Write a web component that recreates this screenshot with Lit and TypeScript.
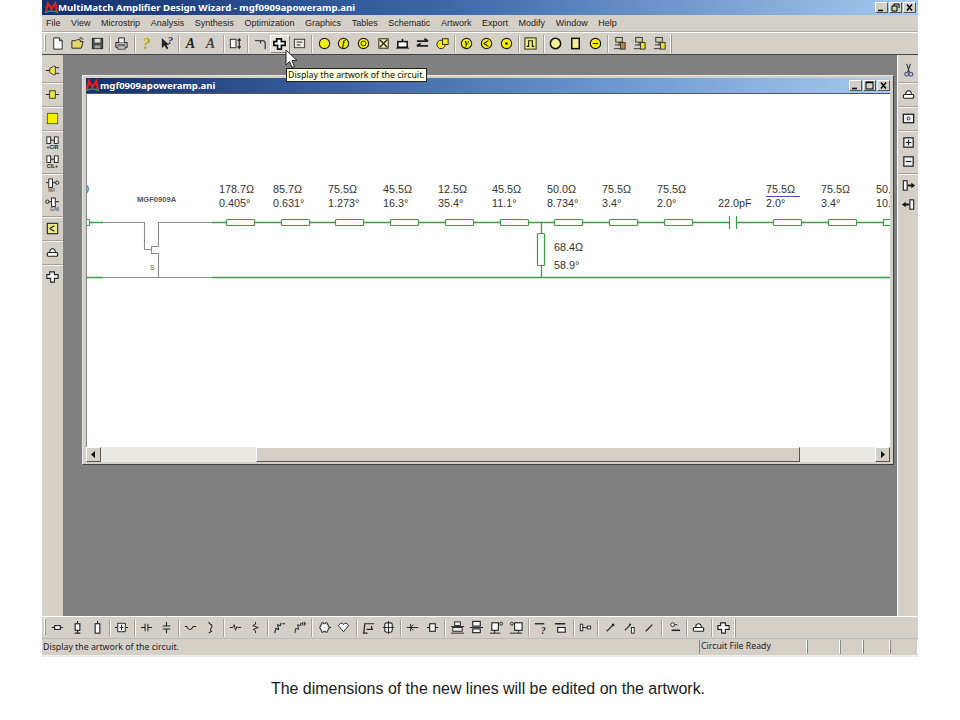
import { LitElement, html, css, svg } from 'lit';
import { customElement } from 'lit/decorators.js';

const GREEN = '#3f9c44';
const GRAY = '#8c8c8c';

const yc = (inner: unknown = '') => svg`<circle cx="8" cy="8" r="5.5" fill="#f4ee10" stroke="#222" stroke-width="1.2"/>${inner}`;
const ln = (d: string, w = 1, c = '#222') => svg`<path d=${d} fill="none" stroke=${c} stroke-width=${w}/>`;
const tx = (t: string, x: number, y: number, size: number, color = '#222') =>
  svg`<text x=${x} y=${y} font-size=${size} font-family="Liberation Serif, serif" font-weight="bold" font-style="italic" fill=${color} text-anchor="middle">${t}</text>`;
const plus = 'M2 6H5V3H10V6H14V10H10V14H6V10H2Z';

const ICONS: Record<string, unknown> = {
  newf: svg`<path d="M4 2H10L13 5V14H4Z" fill="#fff" stroke="#222"/>${ln('M10 2V5H13')}`,
  open: svg`<path d="M2 13V5H6L7 4H11V6H14L12 13Z" fill="#e6d668" stroke="#222"/>${ln('M10 2Q13 1 14 4', 1)}`,
  save: svg`<rect x="2.5" y="2.5" width="11" height="11" fill="#4c4c4c" stroke="#222"/><rect x="5" y="3" width="6" height="4" fill="#ddd"/><rect x="5" y="10" width="6" height="3" fill="#aaa"/>`,
  print: svg`<rect x="2" y="7" width="12" height="5" fill="#bbb" stroke="#222"/><path d="M5 7V2H11V7M4 12V14H12V12" fill="#eee" stroke="#222"/>${ln('M4 9.5H12')}`,
  help: tx('?', 8, 14, 17, '#b0a810'),
  ctx: svg`<path d="M3 2V13L6 10L8 14L10 13L8 9.5H11Z" fill="#222"/>${tx('?', 12, 9, 12, '#26267a')}`,
  a1: tx('A', 8, 13, 15),
  a2: tx('A', 8, 13, 15, '#444'),
  dim: svg`<rect x="2.5" y="3.5" width="6" height="9" fill="#fff" stroke="#222"/>${ln('M12 3V13M10.5 5L12 3L13.5 5M10.5 11L12 13L13.5 11', 1.2)}`,
  bend: ln('M2 5H10Q13 5 13 8V14M8 5V8', 1.4, '#444'),
  cross: svg`<path d=${plus} fill="#fff" stroke="#111" stroke-width="1.8"/>`,
  disp: svg`<rect x="2.5" y="3.5" width="11" height="9" fill="#e8e8e0" stroke="#333"/>${ln('M5 6.5H11M5 9.5H9')}`,
  c1: yc(),
  c2: yc(tx('f', 8, 11, 9)),
  c3: yc(svg`<circle cx="8" cy="8" r="2.6" fill="none" stroke="#222"/>`),
  grid: svg`<rect x="3" y="3" width="10" height="10" fill="#f4f0a0" stroke="#222"/>${ln('M4 4L12 12M12 4L4 12', 1.4)}`,
  tee: svg`${ln('M1 13H15')}<rect x="3" y="6" width="10" height="6" fill="#fff" stroke="#111" stroke-width="1.6"/>${ln('M8 3V6', 1.6, '#111')}`,
  swap: ln('M2 5.5H14M10 3L14 5.5M2 10.5H14M6 8L2 10.5', 2, '#222'),
  c4: svg`<circle cx="6.5" cy="9" r="4.5" fill="#f4ee10" stroke="#222"/><rect x="8" y="3" width="6" height="6" fill="#f4ee10" stroke="#222"/>`,
  cy: yc(tx('y', 8, 11, 10)),
  cs: yc(ln('M5 8L10 5M5 8L10 11', 1.2)),
  cd: yc(svg`<circle cx="8" cy="8" r="1.3" fill="#111"/>`),
  pulse: svg`<rect x="2" y="2" width="12" height="12" fill="#f0ea70" stroke="#222"/>${ln('M4 11H6V5H10V11H12', 1.2)}`,
  d1: svg`<circle cx="8" cy="8" r="5.5" fill="#f4f090" stroke="#111" stroke-width="1.6"/>`,
  d2: svg`<rect x="4" y="2.5" width="8" height="11" fill="#f4f090" stroke="#111" stroke-width="1.6"/>`,
  d3: svg`<circle cx="8" cy="8" r="5.5" fill="#f4ee10" stroke="#111" stroke-width="1.2"/>${ln('M5 8H11')}`,
  net1: svg`<rect x="4" y="1.5" width="7" height="5" fill="#cfcfa8" stroke="#333"/>${ln('M2 13.5H9M7.5 6.5V10M3 9.5H9', 1, '#333')}<rect x="9" y="7" width="5" height="7" fill="#b8862c" stroke="#333"/>`,
  net2: svg`<rect x="4" y="1.5" width="7" height="5" fill="#cfcfa8" stroke="#333"/>${ln('M2 13.5H9M7.5 6.5V10M3 9.5H9', 1, '#333')}<rect x="9" y="7" width="5" height="7" fill="#eee020" stroke="#333"/>`,
  tlh: svg`${ln('M2 8H14', 1.1)}<rect x="5" y="6" width="6" height="4" fill="#fff" stroke="#222" stroke-width="1.2"/>`,
  tlv: svg`${ln('M8 1V14M5 14H11', 1.1)}<rect x="5.5" y="4" width="5" height="7" fill="#fff" stroke="#222" stroke-width="1.2"/>`,
  tlo: svg`${ln('M8 1V4', 1.1)}<rect x="5.5" y="4" width="5" height="10" fill="#fff" stroke="#222" stroke-width="1.2"/>`,
  box: svg`${ln('M1 8H15', 1.1)}<rect x="4" y="3.5" width="8" height="9" fill="#fff" stroke="#222"/>${ln('M8 5V11M6 8H10')}`,
  caph: ln('M2 8H6.5M9.5 8H14M6.5 4V12M9.5 4V12', 1.1),
  capv: ln('M8 2V6.5M8 9.5V14M4 6.5H12M4 9.5H12', 1.1),
  indh: ln('M2 7H4Q6 11 8 10T11 7H14', 1.1),
  indv: ln('M6 2L7 4Q11 5 9 8T9 12L6 14', 1.1),
  resh: ln('M2 8H5L6.5 5L8 11L9.5 7L10.5 8H14', 1),
  resv: ln('M8 2V4.5L5 6L11 8L5.5 10L8 11.5V14', 1),
  zig1: ln('M3 14L4 9L7 10L6 5L9 6L9.5 3M11 4H14', 1.1),
  zig2: ln('M3 14L4 9L7 10L6 5L9 6L9.5 3M10 4H11.5M11.5 2V6M13.5 2V6M13.5 4H15', 1),
  gear: svg`<path d="M5 3H7V4H9V3H11V5H12V7H13V9H12V11H11V13H9V12H7V13H5V11H4V9H3V7H4V5H5Z" fill="#fff" stroke="#222"/>${ln('M13 8H15')}`,
  heart: svg`<path d="M2.5 6L5 3.5H7L8 5L9.5 3.5H11.5L13.5 6L8 12.5Z" fill="#fff" stroke="#222"/>`,
  bent: ln('M3 14L4 4H14M6 10H12L11 6.5M2 14H7', 1.3),
  cyl: svg`<rect x="4" y="3" width="8" height="10" rx="2" fill="#fff" stroke="#222" stroke-width="1.2"/>${ln('M8 1V15M2 8H14')}`,
  fork: ln('M2 8H14M6 4V12M9 5L6 8L9 11', 1),
  sqd: svg`${ln('M2 8H14', 1.1)}<rect x="5" y="4" width="6" height="8" fill="#fff" stroke="#222" stroke-width="1.2"/>`,
  stk: svg`<rect x="5" y="2" width="6" height="4" fill="#eee" stroke="#222"/><rect x="3" y="8" width="10" height="4" fill="#eee" stroke="#222"/>${ln('M1 14H15M8 6V8M1 7H15')}`,
  stk2: svg`<rect x="4" y="1.5" width="8" height="5" fill="#fff" stroke="#222" stroke-width="1.2"/><rect x="4" y="9.5" width="8" height="4" fill="#fff" stroke="#222" stroke-width="1.2"/>${ln('M1 8H15')}`,
  pad1: svg`<rect x="3" y="3" width="7" height="8" fill="#fff" stroke="#222" stroke-width="1.2"/><circle cx="13" cy="4" r="1.6" fill="none" stroke="#222"/>${ln('M1 14H12M6 11V14')}`,
  pad2: svg`<rect x="6" y="3" width="8" height="8" fill="#fff" stroke="#222" stroke-width="1.2"/><circle cx="3" cy="4" r="1.6" fill="none" stroke="#222"/>${ln('M1 14H14M10 11V14')}`,
  qbar: svg`${ln('M2 4H12', 1.4)}${tx('?', 11, 15, 10)}`,
  tbar: svg`${ln('M2 4H13', 1.6)}<rect x="5" y="8" width="8" height="5" fill="#fff" stroke="#222" stroke-width="1.2"/>`,
  conn: svg`<rect x="2.5" y="4.5" width="2.5" height="7" fill="#fff" stroke="#222"/>${ln('M5 8H10')}<rect x="10" y="6.5" width="3.5" height="3" fill="#fff" stroke="#222"/>`,
  diag: svg`${ln('M4 12L10 6', 1.2)}<rect x="9.5" y="4" width="2.5" height="2.5" fill="#222"/>`,
  diagb: svg`${ln('M3 11L8 6', 1.2)}<rect x="10" y="8" width="3" height="6" fill="#fff" stroke="#222"/><rect x="7.5" y="4" width="2" height="2" fill="#222"/>`,
  diag2: ln('M4 12L11 5', 1.3),
  dots: svg`<circle cx="6" cy="5" r="2" fill="#fff" stroke="#222"/>${ln('M8 5H11')}${ln('M5 11H14', 1.6, '#222')}`,
  bump: svg`<path d="M5 8Q5 4 8 4T11 8" fill="#fff" stroke="#222" stroke-width="1.2"/><rect x="2.5" y="8" width="11" height="4" rx="1" fill="#fff" stroke="#222" stroke-width="1.2"/>`,
  plus: svg`<path d=${plus} fill="#fff" stroke="#222" stroke-width="1.2"/>`,
  lead: svg`${ln('M1 8H5M11 5H15M11 11H15')}<path d="M5 6L9 3.5H11V12.5H9L5 10Z" fill="#f0e840" stroke="#333"/>`,
  lead2: svg`${ln('M1 8H15')}<rect x="5" y="4" width="6" height="8" fill="#f0e840" stroke="#333"/>`,
  yel: svg`<rect x="2.5" y="2.5" width="11" height="11" fill="#f6f000" stroke="#555"/>`,
  cir1: svg`<rect x="2" y="2" width="4" height="7" fill="#fff" stroke="#222"/><rect x="10" y="2" width="4" height="7" fill="#fff" stroke="#222"/>${ln('M6 5.5H10')}<text x="8" y="15" font-size="5.5" font-weight="bold" font-family="Liberation Sans" text-anchor="middle" fill="#222">+CIR</text>`,
  cir2: svg`<rect x="2" y="2" width="4" height="7" fill="#fff" stroke="#222"/><rect x="10" y="2" width="4" height="7" fill="#fff" stroke="#222"/>${ln('M6 5.5H10')}<text x="8" y="15" font-size="5.5" font-weight="bold" font-family="Liberation Sans" text-anchor="middle" fill="#222">CIL+</text>`,
  pin1: svg`<rect x="4" y="1" width="4" height="9" fill="#fff" stroke="#222"/>${ln('M1 5H4M8 5H11')}<circle cx="13" cy="5" r="1.8" fill="none" stroke="#222"/><text x="7" y="15" font-size="5" font-family="Liberation Sans" text-anchor="middle" fill="#333">M/I</text>`,
  pin2: svg`<rect x="7" y="1" width="4" height="9" fill="#fff" stroke="#222"/>${ln('M4 5H7M11 5H15')}<circle cx="2.5" cy="5" r="1.8" fill="none" stroke="#222"/><text x="10" y="15" font-size="5" font-family="Liberation Sans" text-anchor="middle" fill="#333">G/M</text>`,
  ysw: svg`<rect x="2.5" y="2.5" width="11" height="11" fill="#eee890" stroke="#333" stroke-width="1.3"/>${ln('M5 8L10 5M5 8L10 11', 1.3)}`,
  scis: svg`${ln('M6 1L9 10M10 1L7 10', 1.2, '#334')}<circle cx="6" cy="12" r="2" fill="none" stroke="#558" stroke-width="1.3"/><circle cx="10.5" cy="12" r="2" fill="none" stroke="#558" stroke-width="1.3"/>`,
  dotbox: svg`<rect x="2.5" y="3.5" width="11" height="9" fill="#eee" stroke="#222" stroke-width="1.4"/><circle cx="8" cy="8" r="1.5" fill="none" stroke="#222"/>`,
  zin: svg`<rect x="3" y="3" width="10" height="10" fill="#eee" stroke="#222" stroke-width="1.3"/>${ln('M5 8H11M8 5V11', 1.2)}`,
  zout: svg`<rect x="3" y="3" width="10" height="10" fill="#eee" stroke="#222" stroke-width="1.3"/>${ln('M5 8H11', 1.2)}`,
  out: svg`<rect x="2.5" y="3" width="4" height="10" fill="#fff" stroke="#222" stroke-width="1.2"/>${ln('M7 8H12', 2, '#111')}<path d="M11 5L15 8L11 11Z" fill="#111"/>`,
  inn: svg`<rect x="9.5" y="3" width="4" height="10" fill="#fff" stroke="#222" stroke-width="1.2"/>${ln('M4 8H9', 2, '#111')}<path d="M5 5L1 8L5 11Z" fill="#111"/>`,
};

const TOP = 'newf open save | print | help ctx | a1 a2 | dim | bend cross disp | c1 c2 c3 grid tee swap c4 | cy cs cd | pulse | d1 d2 d3 | net1 net2 net2'.split(' ');
const BOTTOM = 'tlh tlv tlo | box | caph capv | indh indv | resh resv | zig1 zig2 | gear heart | bent cyl | fork sqd | stk stk2 pad1 pad2 | qbar tbar | conn | diag diagb diag2 | dots | bump | plus'.split(' ');
const LEFT = 'lead | lead2 | yel | cir1 cir2 | pin1 pin2 | ysw | bump | plus'.split(' ');
const RIGHT = 'scis | bump | dotbox | zin zout | out inn'.split(' ');
const MENUS = ['File', 'View', 'Microstrip', 'Analysis', 'Synthesis', 'Optimization', 'Graphics', 'Tables', 'Schematic', 'Artwork', 'Export', 'Modify', 'Window', 'Help'];

const LINES = [226, 281, 335, 390, 445, 500, 554, 609, 664, 773, 828];
const LABELS: [number, string, string][] = [
  [219, '178.7Ω', '0.405°'], [273, '85.7Ω', '0.631°'], [328, '75.5Ω', '1.273°'],
  [383, '45.5Ω', '16.3°'], [438, '12.5Ω', '35.4°'], [492, '45.5Ω', '11.1°'],
  [547, '50.0Ω', '8.734°'], [602, '75.5Ω', '3.4°'], [657, '75.5Ω', '2.0°'],
  [766, '75.5Ω', '2.0°'], [821, '75.5Ω', '3.4°'], [876, '50.0Ω', '10.2°'],
];

const logo = html`<svg class="logo" viewBox="0 0 14 13">
  <path d="M1 11L3 2L7 8L11 2L13 11" fill="none" stroke="#e0201c" stroke-width="2.4"/>
  <path d="M0 12Q7 9 14 12" fill="none" stroke="#2fae3c" stroke-width="1.4"/>
</svg>`;

@customElement('app-root')
export class AppRoot extends LitElement {
  static styles = css`
    :host {
      display: block;
      position: relative;
      width: 960px;
      height: 720px;
      background: #fff;
      overflow: hidden;
      font-family: "Noto Sans", "Liberation Sans", sans-serif;
    }

    .win {
      width: 876px;
      height: 657px;
      margin-left: 42px;
      display: flex;
      flex-direction: column;
      background: #d4d0c8;
    }

    .title {
      height: 15px;
      flex: none;
      display: flex;
      align-items: center;
      gap: 0;
      padding: 0 2px 0 3px;
      background: linear-gradient(90deg, #14306f 0%, #3a66a8 45%, #a6caf0 100%);
      color: #fff;
      font-size: 9.65px;
      font-weight: 700;
      white-space: nowrap;
    }

    .logo {
      width: 13px;
      height: 13px;
      flex: none;
    }

    .caps {
      margin-left: auto;
      display: flex;
      gap: 1px;
    }

    .cap {
      width: 13px;
      height: 11px;
      background: #d4d0c8;
      border: 1px solid;
      border-color: #fff #555 #555 #fff;
      box-sizing: border-box;
      display: flex;
    }

    .cap svg {
      width: 100%;
      height: 100%;
    }

    .menu {
      height: 17px;
      flex: none;
      display: flex;
      align-items: center;
      gap: 10.6px;
      padding-left: 4px;
      font-family: "Liberation Sans", sans-serif;
      font-size: 9px;
      color: #222;
      border-bottom: 1px solid #aaa;
      box-sizing: border-box;
    }

    .bar {
      flex: none;
      display: flex;
      align-items: center;
      box-sizing: border-box;
    }

    .bar.h {
      height: 22px;
      padding-left: 6px;
      border-top: 1px solid #fff;
    }

    .bar.v {
      flex-direction: column;
      width: 21px;
    }

    .grip {
      position: absolute;
      left: 44px;
      width: 2px;
      height: 17px;
      border: 1px solid;
      border-color: #fff #999 #999 #fff;
      box-sizing: border-box;
    }

    .tool {
      flex: none;
      display: flex;
      align-items: center;
      justify-content: center;
      box-sizing: border-box;
    }

    .h .tool {
      width: 19.7px;
      height: 18px;
    }

    .v .tool {
      width: 100%;
      height: 19px;
    }

    .tool svg {
      width: 15px;
      height: 15px;
      overflow: visible;
    }

    .tool.raised {
      background: #e4e1da;
      border: 1px solid;
      border-color: #fff #888 #888 #fff;
    }

    .sep {
      flex: none;
      box-sizing: border-box;
    }

    .h .sep {
      width: 5px;
      height: 18px;
      background: linear-gradient(90deg, transparent 2px, #a5a29b 2px, #a5a29b 3px, #f4f3ef 3px, #f4f3ef 4px, transparent 4px);
    }

    .v .sep {
      width: 100%;
      height: 5px;
      background: linear-gradient(180deg, transparent 2px, #a5a29b 2px, #a5a29b 3px, #f4f3ef 3px, #f4f3ef 4px, transparent 4px);
    }

    .end {
      width: 2px;
      height: 20px;
      background: #fff;
      box-shadow: inset -1px 0 #999;
      margin-left: 1px;
    }

    .mid {
      flex: 1;
      min-height: 0;
      display: flex;
      border-top: 1px solid #444;
    }

    .side-l {
      width: 22px;
      padding-top: 5.5px;
    }

    .mdi {
      flex: 1;
      position: relative;
      background: #808080;
    }

    .side-r {
      border-left: 1px solid #fff;
      padding-top: 5.5px;
    }

    .child {
      position: absolute;
      left: 19px;
      top: 20px;
      width: 812px;
      height: 390px;
      box-sizing: border-box;
      background: #d4d0c8;
      border: 1px solid;
      border-color: #e8e6e0 #404040 #404040 #e8e6e0;
      padding: 2px 3px;
      display: flex;
      flex-direction: column;
    }

    .child .title {
      height: 15px;
      font-size: 9.6px;
      padding: 0;
      gap: 1px;
      background: linear-gradient(90deg, #14306f 0%, #5a88c4 55%, #a6caf0 100%);
    }

    .canvas {
      flex: 1;
      min-height: 0;
      background: #fff;
      border-top: 1px solid #555;
      border-left: 1px solid #888;
      margin-top: 0;
    }

    .canvas svg {
      display: block;
      width: 803px;
      height: 352px;
      font-family: "Liberation Sans", sans-serif;
    }

    .scroll {
      height: 15px;
      flex: none;
      display: flex;
      background: #ebe9e4;
    }

    .arrow {
      width: 15px;
      flex: none;
      background: #d4d0c8;
      border: 1px solid;
      border-color: #fff #555 #555 #fff;
      box-sizing: border-box;
      display: flex;
      align-items: center;
      justify-content: center;
      font-size: 0;
    }

    .arrow svg {
      width: 7px;
      height: 7px;
    }

    .gutter {
      width: 155px;
      flex: none;
    }

    .thumb {
      width: 544px;
      flex: none;
      background: #d4d0c8;
      border: 1px solid;
      border-color: #fff #555 #555 #fff;
      box-sizing: border-box;
    }

    .fill {
      flex: 1;
    }

    .bottom {
      border-top: 1px solid #fff;
    }

    .status {
      height: 19px;
      flex: none;
      display: flex;
      align-items: flex-start;
      padding-top: 1px;
      font-size: 8.75px;
      color: #222;
      box-sizing: border-box;
      border-top: 1px solid #bbb;
      border-bottom: 2px solid #eeece6;
    }

    .status .msg {
      flex: 1;
      padding-left: 1px;
      line-height: 14px;
    }

    .pane {
      height: 14px;
      line-height: 13px;
      box-sizing: border-box;
      border-left: 1px solid #888;
      border-right: 1px solid #fff;
      padding-left: 1px;
    }

    .tip {
      position: absolute;
      left: 286px;
      top: 68px;
      width: 141px;
      height: 14px;
      box-sizing: border-box;
      background: #ffffe1;
      border: 1px solid #222;
      font-size: 8.8px;
      line-height: 12px;
      padding-left: 1px;
      color: #111;
      white-space: nowrap;
    }

    .cursor {
      position: absolute;
      left: 285px;
      top: 49px;
      width: 13px;
      height: 20px;
    }

    .caption {
      position: absolute;
      left: 0;
      right: 0;
      top: 680px;
      padding-left: 16px;
      text-align: center;
      font-family: "Liberation Sans", Arial, sans-serif;
      font-size: 15.95px;
      line-height: 18px;
      color: #1a1a1a;
    }
  `;

  private _tool(name: string) {
    if (name === '|') return html`<div class="sep"></div>`;
    const raised = name === 'cross';
    return html`<div class="tool ${raised ? 'raised' : ''}"><svg viewBox="0 0 16 16">${ICONS[name]}</svg></div>`;
  }

  private _caps(restore: boolean) {
    return html`<div class="caps">
      <div class="cap"><svg viewBox="0 0 11 9">${ln('M2 7.5H7', 1.6, '#000')}</svg></div>
      <div class="cap"><svg viewBox="0 0 11 9">
        ${restore
          ? svg`${ln('M4 1H9V5M4 1V3M2 3H7V8H2Z', 1, '#000')}`
          : svg`<rect x="2" y="1" width="7" height="7" fill="none" stroke="#000"/>${ln('M2 1.5H9', 1.4, '#000')}`}
      </svg></div>
      <div class="cap"><svg viewBox="0 0 11 9">${ln('M3 1.5L8 7.5M8 1.5L3 7.5', 1.5, '#000')}</svg></div>
    </div>`;
  }

  private _diagram() {
    return html`<svg viewBox="87 94 803 352">
      <g fill="none" stroke=${GREEN} stroke-width="1.3">
        <path d="M87 222.5H103M212 222.5H890M87 277.5H103M212 277.5H890M541.5 222V277"/>
      </g>
      <path d="M103 222.5H144.5V249.5H151.5V246.5H158.5V222.5H212M151.5 249.5V253.5H158.5V277.5M103 277.5H212" fill="none" stroke=${GRAY} stroke-width="1.1"/>
      ${LINES.map(x => svg`<rect x=${x + 0.5} y="219.5" width="28" height="6" rx="1" fill="#fff" stroke=${GREEN} stroke-width="1.2"/>`)}
      <rect x="883.5" y="219.5" width="10" height="6" fill="#fff" stroke=${GREEN} stroke-width="1.2"/>
      <rect x="84" y="219.5" width="5.5" height="6" rx="1" fill="#fff" stroke=${GREEN} stroke-width="1.2"/>
      <rect x="537.5" y="233.5" width="7" height="32" rx="1" fill="#fff" stroke=${GREEN} stroke-width="1.2"/>
      <rect x="730" y="214" width="6" height="16" fill="#fff"/>
      <path d="M729.5 216V229M736.5 216V229" stroke=${GREEN} fill="none" stroke-width="1.2"/>
      <g font-size="10.8" fill="#333">
        <text x="83" y="193">0</text>
        ${LABELS.map(([x, z, d]) => svg`<text x=${x} y="193">${z}</text><text x=${x} y="207">${d}</text>`)}
        <text x="718" y="207">22.0pF</text>
        <text x="554" y="251">68.4Ω</text>
        <text x="554" y="269">58.9°</text>
      </g>
      <path d="M766 196.5H800" stroke="#4a4ac4" fill="none"/>
      <text x="137" y="202" font-size="7.6" font-weight="bold" fill="#555">MGF0909A</text>
      <text x="150" y="270" font-size="7" fill="#555">S</text>
    </svg>`;
  }

  render() {
    return html`
      <div class="win">
        <div class="title">${logo}<span>MultiMatch Amplifier Design Wizard - mgf0909apoweramp.ani</span>${this._caps(true)}</div>
        <div class="menu">${MENUS.map(m => html`<span>${m}</span>`)}</div>
        <div class="bar h">${TOP.map(t => this._tool(t))}<div class="end"></div></div>
        <div class="mid">
          <div class="bar v side-l">${LEFT.map(t => this._tool(t))}</div>
          <div class="mdi">
            <div class="child">
              <div class="title">${logo}<span>mgf0909apoweramp.ani</span>${this._caps(false)}</div>
              <div class="canvas">${this._diagram()}</div>
              <div class="scroll">
                <div class="arrow"><svg viewBox="0 0 7 7"><path d="M5 0V7L1 3.5Z" fill="#000"/></svg></div>
                <div class="gutter"></div>
                <div class="thumb"></div>
                <div class="fill"></div>
                <div class="arrow"><svg viewBox="0 0 7 7"><path d="M2 0V7L6 3.5Z" fill="#000"/></svg></div>
              </div>
            </div>
          </div>
          <div class="bar v side-r">${RIGHT.map(t => this._tool(t))}</div>
        </div>
        <div class="bar h bottom">${BOTTOM.map(t => this._tool(t))}<div class="end"></div></div>
        <div class="status">
          <div class="msg">Display the artwork of the circuit.</div>
          <div class="pane" style="width:108px">Circuit File Ready</div>
          <div class="pane" style="width:33px"></div>
          <div class="pane" style="width:23px"></div>
          <div class="pane" style="width:27px"></div>
          <div class="pane" style="width:28px"></div>
        </div>
      </div>
      <div class="grip" style="top:34px"></div>
      <div class="grip" style="top:618px"></div>
      <svg class="cursor" viewBox="0 0 13 20">
        <path d="M1 1V16L4.5 12.5L7 18.5L9.5 17.5L7 11.5H12Z" fill="#fff" stroke="#222" stroke-width="1"/>
      </svg>
      <div class="tip">Display the artwork of the circuit.</div>
      <div class="caption">The dimensions of the new lines will be edited on the artwork.</div>
    `;
  }
}
